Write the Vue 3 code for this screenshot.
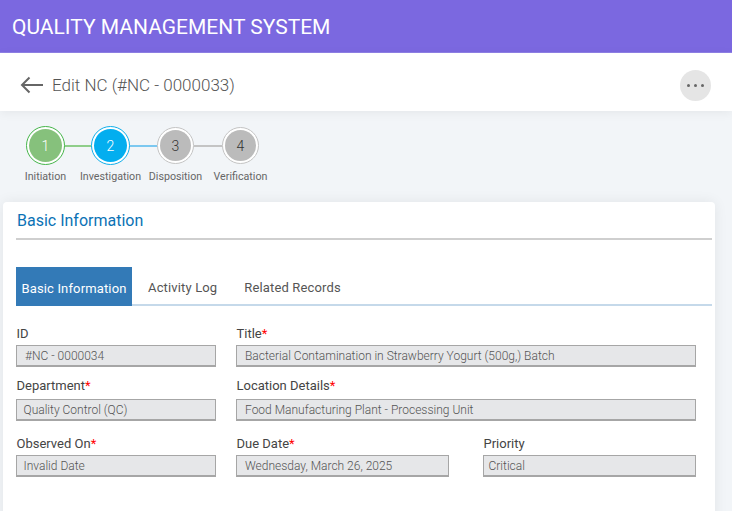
<template>
  <div class="page">
    <header class="app-bar">QUALITY MANAGEMENT SYSTEM</header>

    <div class="sub-bar">
      <svg class="back-icon" width="24" height="18" viewBox="0 0 24 18">
        <path d="M23 9H2M9.5 1.5 2 9l7.5 7.5" fill="none" stroke="#666" stroke-width="2" />
      </svg>
      <span class="sub-title">Edit NC (#NC - 0000033)</span>
      <button class="more-btn">
        <span class="dot"></span>
        <span class="dot"></span>
        <span class="dot"></span>
      </button>
    </div>

    <div class="stepper">
      <div
        v-for="(step, i) in steps"
        :key="step.label"
        class="step"
        :class="step.state"
      >
        <div class="step-ring">
          <div class="step-num">{{ i + 1 }}</div>
        </div>
        <div class="step-label">{{ step.label }}</div>
      </div>
    </div>

    <section class="card">
      <h2 class="card-title">Basic Information</h2>

      <div class="tabs">
        <div
          v-for="(tab, i) in tabs"
          :key="tab"
          class="tab"
          :class="{ active: i === 0 }"
        >{{ tab }}</div>
      </div>

      <div class="form">
        <div v-for="row in rows" :key="row[0].label" class="form-row">
          <div
            v-for="field in row"
            :key="field.label"
            class="field"
            :class="field.cls"
          >
            <label class="field-label">{{ field.label }}<span v-if="field.req" class="req">*</span></label>
            <div class="field-input">{{ field.value }}</div>
          </div>
        </div>
      </div>
    </section>
  </div>
</template>

<script setup>
const steps = [
  { label: 'Initiation', state: 'done' },
  { label: 'Investigation', state: 'current' },
  { label: 'Disposition', state: 'todo' },
  { label: 'Verification', state: 'todo' },
]

const tabs = ['Basic Information', 'Activity Log', 'Related Records']

const rows = [
  [
    { label: 'ID', value: '#NC - 0000034', cls: 'w-first' },
    { label: 'Title', req: true, value: 'Bacterial Contamination in Strawberry Yogurt (500g,) Batch', cls: 'w-wide' },
  ],
  [
    { label: 'Department', req: true, value: 'Quality Control (QC)', cls: 'w-first tight' },
    { label: 'Location Details', req: true, value: 'Food Manufacturing Plant - Processing Unit', cls: 'w-wide' },
  ],
  [
    { label: 'Observed On', req: true, value: 'Invalid Date', cls: 'w-first tight' },
    { label: 'Due Date', req: true, value: 'Wednesday, March 26, 2025', cls: 'w-mid' },
    { label: 'Priority', value: 'Critical', cls: 'w-mid tighter' },
  ],
]
</script>

<style>
html,
body {
  margin: 0;
  height: 100%;
  overflow: hidden;
  background: #f2f5f8;
}
</style>

<style scoped>
.page {
  height: 511px;
  overflow: hidden;
  font-family: Roboto, "Liberation Sans", sans-serif;
  background: #f2f5f8;
}

.app-bar {
  height: 53px;
  box-sizing: border-box;
  padding: 1px 12px 0;
  display: flex;
  align-items: center;
  background: #7b68e0;
  border-bottom: 1px solid #8f80e6;
  color: #fff;
  font-size: 21px;
  font-weight: 400;
}

.sub-bar {
  height: 58px;
  box-sizing: border-box;
  padding: 6px 21px 0 20px;
  display: flex;
  align-items: center;
  background: #fff;
  box-shadow: 0 2px 10px rgba(0, 0, 0, 0.06);
  position: relative;
}

.back-icon {
  flex: none;
}

.sub-title {
  margin-left: 8px;
  font-size: 17px;
  font-weight: 300;
  color: #555;
}

.more-btn {
  margin: 1px 0 0 auto;
  width: 31px;
  height: 31px;
  padding: 0;
  border: 0;
  border-radius: 50%;
  background: #e5e5e5;
  display: flex;
  align-items: center;
  justify-content: center;
  gap: 4.3px;
}

.dot {
  width: 3px;
  height: 3px;
  border-radius: 50%;
  background: #666;
}

.stepper {
  height: 91px;
  box-sizing: border-box;
  padding: 15px 0 0 13px;
  display: flex;
}

.step {
  display: flex;
  flex-direction: column;
  align-items: center;
  position: relative;
  width: 65px;
}

.step:not(:last-child)::after {
  content: "";
  position: absolute;
  top: 19px;
  left: 51px;
  width: 28px;
  height: 1.5px;
  background: #c4c4c4;
}

.step.done::after {
  background: #8fce8a;
}

.step.current::after {
  background: #7cc8f0;
}

.step-ring {
  width: 39px;
  height: 39px;
  box-sizing: border-box;
  padding: 2px;
  border-radius: 50%;
  border: 1px solid #c4c4c4;
  background: #fff;
  position: relative;
  z-index: 1;
}

.todo .step-ring {
  width: 37px;
  height: 37px;
  margin: 1px 0;
}

.step-num {
  width: 100%;
  height: 100%;
  border-radius: 50%;
  display: flex;
  align-items: center;
  justify-content: center;
  font-size: 14px;
  font-weight: 300;
  background: #bbb;
  color: #333;
}

.done .step-ring {
  border-color: #45b54a;
}

.done .step-num {
  background: #86c17c;
  color: #fff;
}

.current .step-ring {
  border-color: #10aeea;
}

.current .step-num {
  background: #03aeef;
  color: #fff;
}

.step-label {
  margin-top: 5px;
  font-size: 10.7px;
  color: #666;
  white-space: nowrap;
}

.card {
  width: 712px;
  height: 340px;
  margin-left: 3px;
  box-sizing: border-box;
  padding: 0 3px 0 13px;
  background: #fff;
  border-radius: 4px;
  box-shadow: 0 0 14px rgba(0, 0, 0, 0.07);
}

.card-title {
  margin: 0;
  height: 38px;
  box-sizing: border-box;
  padding: 9px 0 0 1px;
  border-bottom: 2px solid #cfcfcf;
  font-size: 16px;
  font-weight: 400;
  color: #0b72b5;
}

.tabs {
  margin-top: 27px;
  height: 39px;
  box-sizing: border-box;
  border-bottom: 2px solid #c5d9ea;
  display: flex;
}

.tab {
  height: 37px;
  box-sizing: border-box;
  padding: 4px 11px 0 16px;
  display: flex;
  align-items: center;
  font-size: 13px;
  letter-spacing: 0.15px;
  color: #555;
}

.tab.active {
  width: 116px;
  height: 39px;
  padding: 4px 0 0;
  justify-content: center;
  background: #337ab7;
  color: #fff;
}

.form {
  padding-top: 19px;
}

.form-row {
  display: flex;
  gap: 20px;
  margin-bottom: 10px;
}

.form-row:nth-child(2) {
  margin-bottom: 14px;
}

.form-row:nth-child(2) .field-label {
  margin-bottom: 4px;
}

.field:nth-child(3) {
  margin-left: 14px;
}

.w-first {
  width: 200px;
}

.w-wide {
  width: 460px;
}

.w-mid {
  width: 213px;
}

.field-label {
  display: block;
  height: 18px;
  line-height: 18px;
  margin-bottom: 2px;
  padding-left: 0.5px;
  font-size: 13px;
  color: #444;
}

.req {
  color: #ff0000;
}

.field-input {
  height: 22px;
  box-sizing: border-box;
  padding: 1px 8px 0;
  display: flex;
  align-items: center;
  background: #e6e7e9;
  border: 1px solid #a6a6a6;
  border-bottom-width: 2px;
  font-size: 12px;
  font-weight: 300;
  color: #555;
  white-space: nowrap;
}

.tight .field-input {
  padding-left: 6.5px;
}

.tighter .field-input {
  padding-left: 4.5px;
}
</style>
